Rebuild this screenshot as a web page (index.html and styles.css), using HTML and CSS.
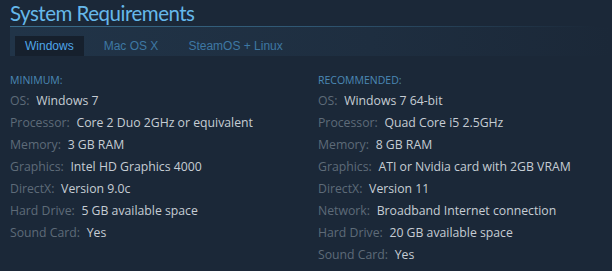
FILE: index.html
```html
<!DOCTYPE html>
<html lang="en">
<head>
  <meta charset="UTF-8" />
  <title>System Requirements</title>
  <link rel="stylesheet" href="styles.css">
</head>
<body>
  <div class="sysreq">
    <h2 class="sysreq-title">System Requirements</h2>

    <div class="tabs">
      <span class="tab active">Windows</span>
      <span class="tab">Mac OS X</span>
      <span class="tab">SteamOS + Linux</span>
    </div>

    <div class="req-columns">
      <ul class="req-list">
        <li class="req-head">MINIMUM:</li>
        <li><span class="label">OS:</span> Windows 7</li>
        <li><span class="label">Processor:</span> Core 2 Duo 2GHz or equivalent</li>
        <li><span class="label">Memory:</span> 3 GB RAM</li>
        <li><span class="label">Graphics:</span> Intel HD Graphics 4000</li>
        <li><span class="label">DirectX:</span> Version 9.0c</li>
        <li><span class="label">Hard Drive:</span> 5 GB available space</li>
        <li><span class="label">Sound Card:</span> Yes</li>
      </ul>

      <ul class="req-list">
        <li class="req-head">RECOMMENDED:</li>
        <li><span class="label">OS:</span> Windows 7 64-bit</li>
        <li><span class="label">Processor:</span> Quad Core i5 2.5GHz</li>
        <li><span class="label">Memory:</span> 8 GB RAM</li>
        <li><span class="label">Graphics:</span> ATI or Nvidia card with 2GB VRAM</li>
        <li><span class="label">DirectX:</span> Version 11</li>
        <li><span class="label">Network:</span> Broadband Internet connection</li>
        <li><span class="label">Hard Drive:</span> 20 GB available space</li>
        <li><span class="label">Sound Card:</span> Yes</li>
      </ul>
    </div>
  </div>
</body>
</html>
```

FILE: styles.css
```css
body {
  margin: 0;
  background-color: #1b2838;
  font-family: 'Open Sans', sans-serif;
}

.sysreq {
  padding: 0 0 0 10px;
}

.sysreq-title {
  margin: 0;
  padding-top: 1px;
  font-family: Lato, 'Open Sans', sans-serif;
  font-weight: normal;
  font-size: 20.5px;
  letter-spacing: -0.5px;
  line-height: 24px;
  color: #66b8ea;
  border-bottom: 1px solid transparent;
  border-image: linear-gradient(to right, #3b6e8c 0%, #2f5672 50%, rgba(47, 86, 114, 0) 97%) 1;
  padding-bottom: 1px;
}

.tabs {
  display: flex;
  align-items: flex-end;
  height: 29px;
  padding-left: 5px;
  background: linear-gradient(to right, #213448 0%, #1e2e40 60%, #1b2838 100%);
}

.tab {
  padding: 0 10px;
  height: 20px;
  line-height: 20px;
  font-family: 'Liberation Sans', Arial, sans-serif;
  font-size: 12px;
  color: #3e78a3;
  margin-right: 10px;
}

.tab.active {
  background-color: #16202d;
  color: #4fa6e8;
}

.req-columns {
  display: grid;
  grid-template-columns: 308px 1fr;
  margin-top: 15px;
}

.req-list {
  list-style: none;
  margin: 0;
  padding: 0;
}

.req-list li {
  font-size: 12.25px;
  line-height: 22px;
  color: #c6cdd4;
}

.req-list .req-head {
  font-size: 10.5px;
  line-height: 18px;
  color: #4b88b6;
  margin-bottom: 1px;
}

.label {
  color: #5e6b78;
  margin-right: 3.5px;
}
```
